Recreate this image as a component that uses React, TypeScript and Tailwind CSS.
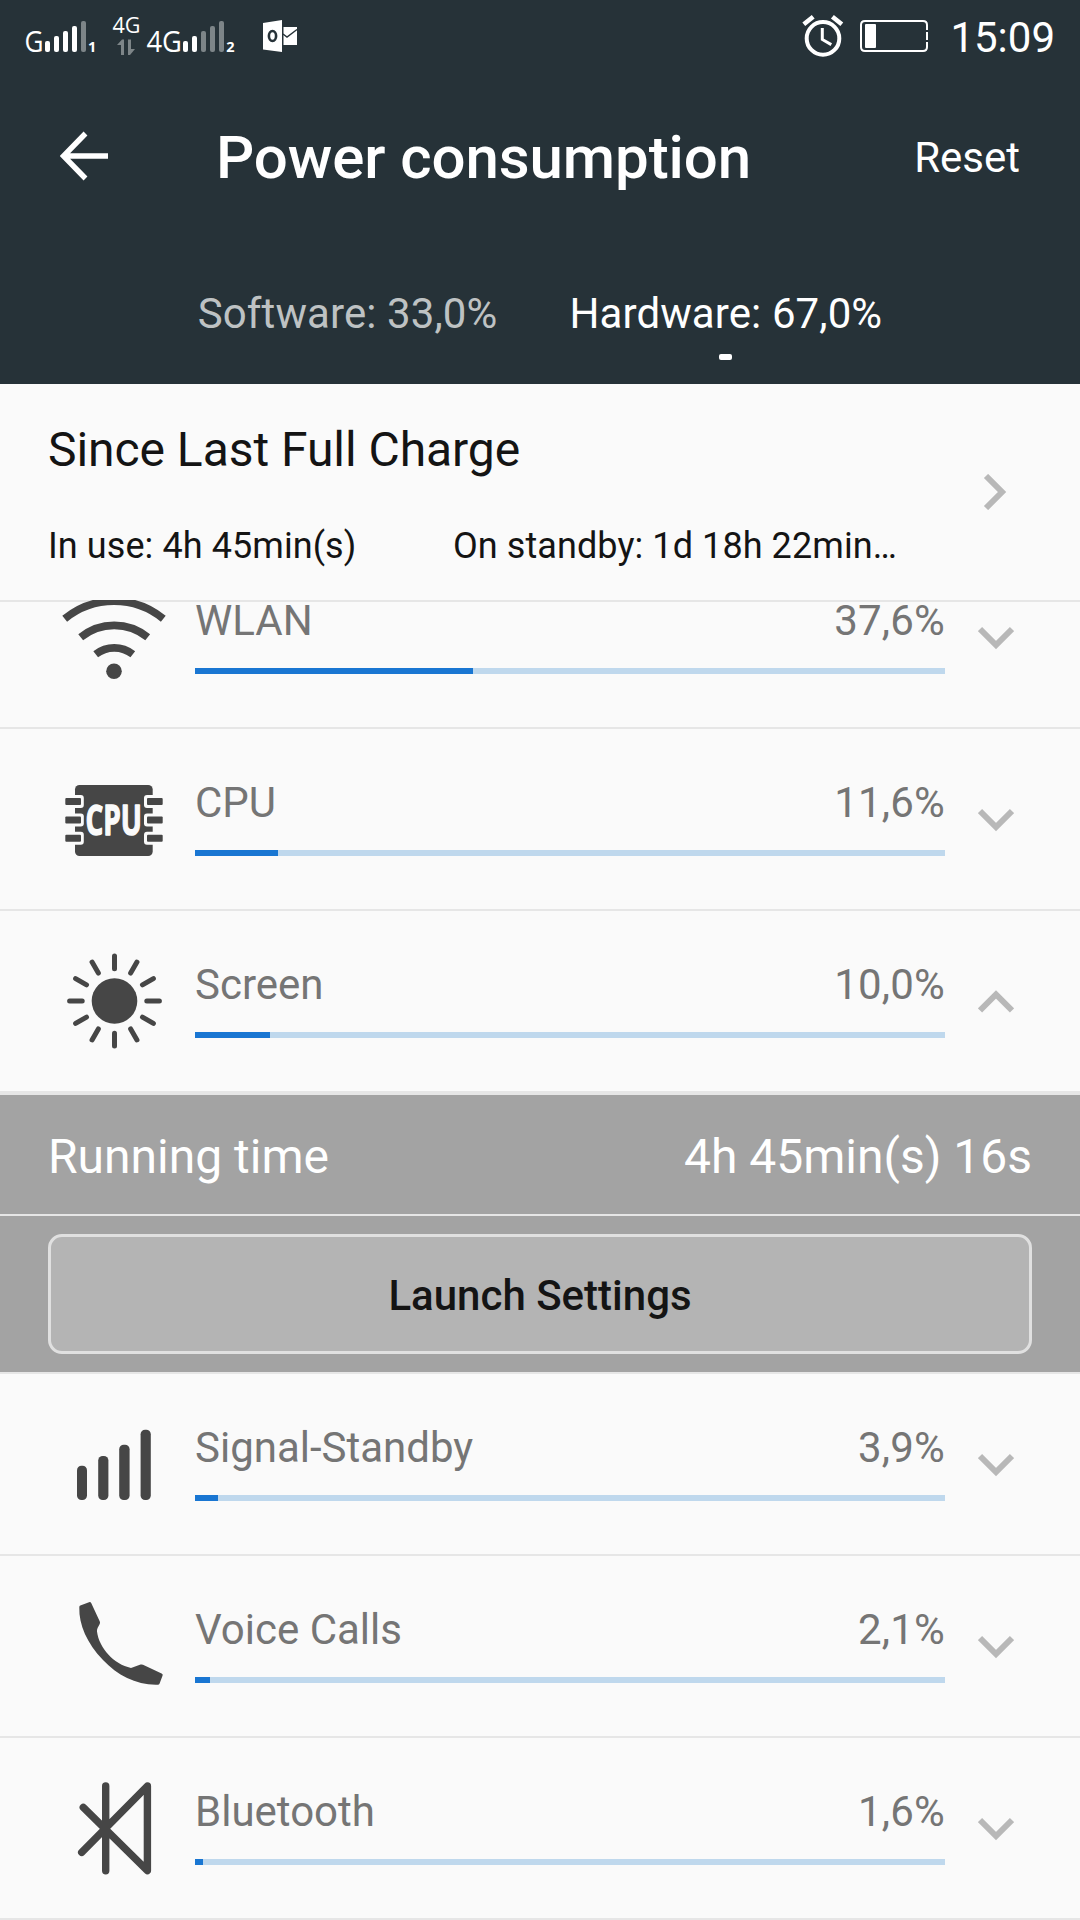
import type { ReactNode } from "react";

type Usage = {
  label: string;
  value: string;
  percent: number;
  icon: ReactNode;
  open?: boolean;
};

const sans = "Roboto, sans-serif";

function WlanIcon() {
  return (
    <g fill="none" stroke="#464646" strokeWidth="7.6">
      <path d="M4.7 35.7A78 78 0 0 1 103.3 35.7" />
      <path d="M20.7 54.3A53 53 0 0 1 87.7 54.3" />
      <path d="M35.7 71.3A30 30 0 0 1 72.8 71.3" />
      <circle cx="54" cy="88.3" r="7.8" fill="#464646" stroke="none" />
    </g>
  );
}

function CpuIcon() {
  const pins = [33, 51.4, 69.8];
  return (
    <g fill="#464646">
      <rect x="15" y="20" width="77.7" height="71" rx="4.5" />
      {pins.map((y) => (
        <g key={y}>
          <rect x="3" y={y - 3} width="20.8" height="13" rx="3" fill="#fafafa" />
          <rect x="5.3" y={y} width="15.7" height="7" rx="1" />
          <rect x="84" y={y - 3} width="21" height="13" rx="3" fill="#fafafa" />
          <rect x="87" y={y} width="15.7" height="7" rx="1" />
        </g>
      ))}
      <text
        x="25.5"
        y="69.7"
        fill="#fafafa"
        stroke="#fafafa"
        strokeWidth="1.4"
        strokeLinejoin="round"
        fontFamily="'Open Sans', sans-serif"
        fontWeight="700"
        fontSize="41"
        textLength="56.5"
        lengthAdjust="spacingAndGlyphs"
      >
        CPU
      </text>
    </g>
  );
}

function ScreenIcon() {
  return (
    <g fill="#464646" stroke="#464646" strokeWidth="5" strokeLinecap="round">
      <circle cx="54.5" cy="54" r="22.8" stroke="none" />
      {Array.from({ length: 12 }, (_, i) => (
        <path key={i} d="M54.5 21.7V9.1" transform={`rotate(${i * 30} 54.5 54)`} />
      ))}
    </g>
  );
}

function SignalIcon() {
  return (
    <g fill="#464646">
      <rect x="17" y="55.7" width="10" height="34.3" rx="4.5" />
      <rect x="38.2" y="46" width="10.2" height="44" rx="4.5" />
      <rect x="59.2" y="34.7" width="10.4" height="55.3" rx="4.5" />
      <rect x="80.6" y="19.7" width="10.2" height="70.3" rx="4.5" />
    </g>
  );
}

function PhoneIcon() {
  return (
    <path
      fill="#464646"
      d="M20.3 13.6L29 10.2Q30.5 9.6 31.2 11L39.8 29.6Q40.3 30.8 39.7 32L37.6 36Q36.8 37.8 37 39.6C39 56 54 72.5 71 76L80.6 72.6Q81.8 72.2 83 72.8L101.6 81.4Q103.1 82 102.6 83.5L99.6 91.5Q99.2 92.7 97.8 92.7C77 93.4 57.5 83.5 43 68C27 51 18.8 33 19.3 15.2Q19.3 14 20.3 13.6Z"
    />
  );
}

function BluetoothIcon() {
  return (
    <path
      fill="none"
      stroke="#464646"
      strokeWidth="7.4"
      strokeLinecap="round"
      strokeLinejoin="round"
      d="M45.7 12V96.7M23.3 33.3L87.4 96.7V12L21.7 78.3"
    />
  );
}

function Chevron({ up }: { up?: boolean }) {
  return (
    <svg width="36" height="24" viewBox="0 0 36 24" className={up ? "mt-[78px] shrink-0" : "mt-[79px] shrink-0"}>
      <path
        d={up ? "M2 21.5L18 5.5L34 21.5" : "M2 3L18 19L34 3"}
        fill="none"
        stroke="#b8b8b8"
        strokeWidth="6"
      />
    </svg>
  );
}

function UsageRow({ item }: { item: Usage }) {
  return (
    <div className="flex h-[182px] items-start border-b-2 border-[#e6e6e6] pl-[60px]">
      <svg width="108" height="108" viewBox="0 0 108 108" className="mt-9 shrink-0">
        {item.icon}
      </svg>
      <div className="ml-[27px] w-[750px] pt-[53px]">
        <div className="flex justify-between text-[42px] leading-[42px] text-[#757575]">
          <span>{item.label}</span>
          <span className="tracking-[0.2px]">{item.value}</span>
        </div>
        <div className="mt-[26px] h-1.5 bg-[#bfd8ed]">
          <div className="h-full bg-[#1976d2]" style={{ width: `${item.percent}%` }} />
        </div>
      </div>
      <div className="ml-[33px]">
        <Chevron up={item.open} />
      </div>
    </div>
  );
}

function SignalBars({ x, active }: { x: number; active: number }) {
  return (
    <>
      {[41, 36, 31, 26, 21].map((top, i) => (
        <rect
          key={top}
          x={x + i * 9}
          y={top}
          width="5"
          height={52 - top}
          rx="2"
          fill={i < active ? "#fff" : "#7d8588"}
        />
      ))}
    </>
  );
}

function StatusBar() {
  return (
    <div className="flex h-[72px] text-white">
      <svg width="100" height="72" viewBox="0 0 100 72" fill="#fff" fontFamily="'Open Sans', sans-serif">
        <text x="24.5" y="51.8" fontSize="29.5" textLength="19" lengthAdjust="spacingAndGlyphs">
          G
        </text>
        <SignalBars x={45} active={4} />
        <text x="88" y="52" fontSize="14.5" fontWeight="700">
          1
        </text>
      </svg>
      <svg width="42" height="72" viewBox="100 0 42 72" fill="#fff" fontFamily="'Open Sans', sans-serif">
        <text x="112.5" y="32.5" fontSize="21" textLength="28" lengthAdjust="spacingAndGlyphs">
          4G
        </text>
        <path d="M117 45L122 39.5H124V55H121V45ZM128 39.5H131V49H135L130 55H128Z" fill="#7d8588" />
      </svg>
      <svg width="100" height="72" viewBox="142 0 100 72" fill="#fff" fontFamily="'Open Sans', sans-serif">
        <text x="146.5" y="51.8" fontSize="29.5" textLength="35.5" lengthAdjust="spacingAndGlyphs">
          4G
        </text>
        <SignalBars x={183} active={2} />
        <text x="226.3" y="52" fontSize="14.5" fontWeight="700">
          2
        </text>
      </svg>
      <svg width="60" height="72" viewBox="242 0 60 72">
        <path d="M263 23L282 20V52L263 49.5Z" fill="#fff" />
        <ellipse cx="272.5" cy="36" rx="3.6" ry="5" fill="none" stroke="#263238" strokeWidth="2.6" />
        <path d="M283.5 27H297V45H283.5Z" fill="#fff" />
        <path d="M283 34L287 37L297 29.5" fill="none" stroke="#263238" strokeWidth="1.4" />
      </svg>
      <svg width="46" height="72" viewBox="800 0 46 72" className="ml-auto" fill="none" stroke="#fff">
        <circle cx="823" cy="38.4" r="16.3" strokeWidth="4" />
        <path d="M822.3 28V39.5L831.3 44.6" strokeWidth="3" />
        <path d="M803.8 24.3L813.2 16.8M832.4 16.8L841.8 24.3" strokeWidth="4.6" />
      </svg>
      <svg width="70" height="72" viewBox="859 0 70 72" className="ml-[13px]" fill="none" stroke="#fff" strokeWidth="2">
        <path d="M927 30V25Q927 21 923 21H865Q861 21 861 25V47Q861 51 865 51H923Q927 51 927 47V42M927 32V40" />
        <rect x="865" y="24" width="11" height="24" rx="1" fill="#fff" stroke="none" />
      </svg>
      <span className="ml-[21px] mr-[25px] mt-[14px] text-[42px] leading-[48px]">15:09</span>
    </div>
  );
}

function Header() {
  return (
    <header className="h-[384px] bg-[#263238] text-white">
      <StatusBar />
      <div className="flex h-[172px] items-center">
        <svg width="50" height="50" viewBox="0 0 50 50" className="mb-1 ml-[60px]">
          <path d="M25.5 2.5L3.5 25L25.5 47.5M3.5 25H48" fill="none" stroke="#fff" strokeWidth="5.4" />
        </svg>
        <h1 className="ml-[106px] text-[60px] font-medium leading-[72px] tracking-[-0.08px]">Power consumption</h1>
        <span className="ml-auto mr-[60px] text-[42px] leading-[48px]">Reset</span>
      </div>
      <nav className="flex justify-center gap-[72px] pt-[46px] text-[42px] leading-[48px]">
        <span className="tracking-[0.1px] text-[#bec2c3]">Software: 33,0%</span>
        <div className="flex flex-col items-center">
          <span className="tracking-[0.1px]">Hardware: 67,0%</span>
          <span className="mt-4 h-1.5 w-[13px] rounded-[2px] bg-white" />
        </div>
      </nav>
    </header>
  );
}

function ChargeSummary() {
  return (
    <section className="flex h-[216px] items-center justify-between pl-12 text-[#141414]">
      <div className="h-full">
        <h2 className="pt-[38px] text-[48px] leading-[56px] tracking-[-0.05px]">Since Last Full Charge</h2>
        <div className="mt-[46px] flex text-[36px] leading-[44px] tracking-[0.08px]">
          <span className="w-[405px]">In use: 4h 45min(s)</span>
          <span>On standby: 1d 18h 22min…</span>
        </div>
      </div>
      <svg width="24" height="36" viewBox="0 0 24 36" className="mr-[73px]">
        <path d="M3 2L19 18L3 34" fill="none" stroke="#b8b8b8" strokeWidth="6" />
      </svg>
    </section>
  );
}

function ScreenDetails() {
  return (
    <div className="border-y-2 border-[#e6e6e6] bg-[#a3a3a3]">
      <div className="flex h-[121px] items-center justify-between border-b-2 border-[#e6e6e6] px-12 pt-1 text-[48px] leading-[56px] text-white">
        <span>Running time</span>
        <span>4h 45min(s) 16s</span>
      </div>
      <div className="h-[156px] px-12 pt-[18px]">
        <button className="h-[120px] w-full rounded-[14px] border-3 border-[#e0e0e0] bg-[#b4b4b4] pt-1 text-[42px] font-medium leading-[48px] text-[#141414]">
          Launch Settings
        </button>
      </div>
    </div>
  );
}

export default function App() {
  const items: Usage[] = [
    { label: "WLAN", value: "37,6%", percent: 37.07, icon: <WlanIcon /> },
    { label: "CPU", value: "11,6%", percent: 11.07, icon: <CpuIcon /> },
    { label: "Screen", value: "10,0%", percent: 10, icon: <ScreenIcon />, open: true },
    { label: "Signal-Standby", value: "3,9%", percent: 3.07, icon: <SignalIcon /> },
    { label: "Voice Calls", value: "2,1%", percent: 2, icon: <PhoneIcon /> },
    { label: "Bluetooth", value: "1,6%", percent: 1.07, icon: <BluetoothIcon /> },
  ];

  return (
    <div className="h-[1920px] w-[1080px] overflow-hidden bg-[#fafafa]" style={{ fontFamily: sans }}>
      <Header />
      <ChargeSummary />
      {/* list is scrolled, so the first row is cut at the top */}
      <main className="h-[1320px] overflow-hidden shadow-[inset_0_2px_0_#e6e6e6]">
        <div className="-mt-[53px]">
          {items.map((item) => (
            <div key={item.label}>
              <UsageRow item={item} />
              {item.open && <ScreenDetails />}
            </div>
          ))}
        </div>
      </main>
    </div>
  );
}
